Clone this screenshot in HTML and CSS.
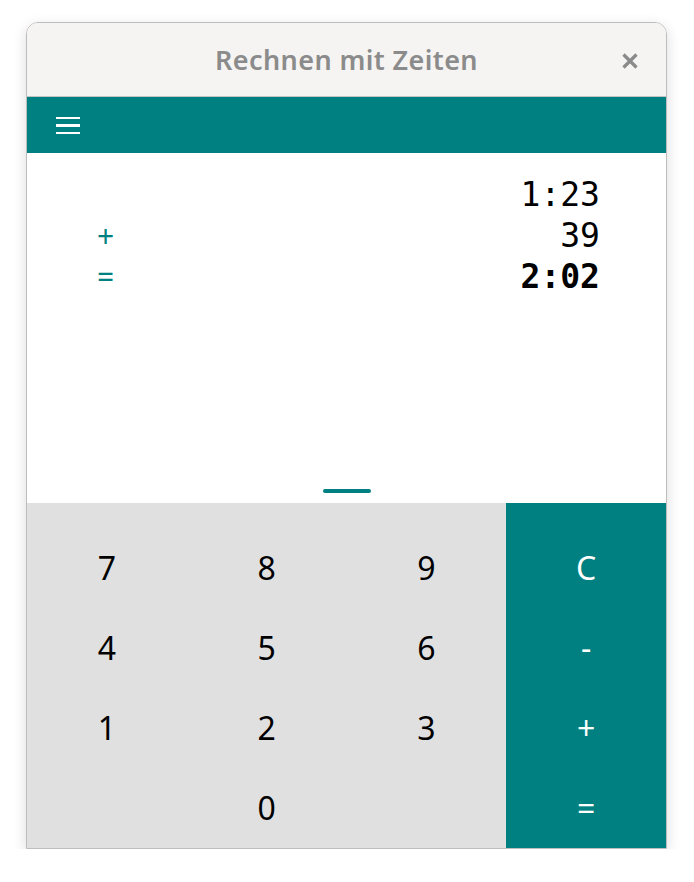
FILE: index.html
```html
<!DOCTYPE html>
<html lang="de">
<head>
<meta charset="utf-8">
<title>Rechnen mit Zeiten</title>
<link rel="stylesheet" href="styles.css">
</head>
<body>
<div class="window">
  <header class="titlebar">
    <span class="title">Rechnen mit Zeiten</span>
    <button class="close" aria-label="Schließen">
      <svg width="16" height="16" viewBox="0 0 16 16"><path d="M1.5 1.5L14.5 14.5M14.5 1.5L1.5 14.5" stroke="#8a8a8a" stroke-width="3.2" stroke-linecap="butt"/></svg>
    </button>
  </header>
  <div class="toolbar">
    <div class="hamburger"><span></span><span></span><span></span></div>
  </div>
  <main class="display">
    <div class="lines">
      <span class="sign"></span><span class="value">1:23</span>
      <span class="sign">+</span><span class="value">39</span>
      <span class="sign">=</span><span class="value result">2:02</span>
    </div>
    <div class="handle"></div>
  </main>
  <section class="keypad">
    <div class="digits">
      <div class="key">7</div><div class="key">8</div><div class="key">9</div>
      <div class="key">4</div><div class="key">5</div><div class="key">6</div>
      <div class="key">1</div><div class="key">2</div><div class="key">3</div>
      <div class="key"></div><div class="key">0</div><div class="key"></div>
    </div>
    <div class="ops">
      <div class="key">C</div>
      <div class="key">-</div>
      <div class="key">+</div>
      <div class="key">=</div>
    </div>
  </section>
</div>
</body>
</html>
```
FILE: styles.css
```css
html, body {
  margin: 0;
  padding: 0;
  background: #ffffff;
}
body {
  padding: 22px 27px 0 26px;
  font-family: "Noto Sans", "Open Sans", sans-serif;
}
.window {
  width: 639px;
  border: 1px solid #bdbdbd;
  border-radius: 12px 12px 0 0;
  overflow: hidden;
  box-shadow: 0 4px 14px rgba(0, 0, 0, 0.14);
  display: flex;
  flex-direction: column;
}
.titlebar {
  height: 73px;
  background: #f5f4f2;
  border-bottom: 1px solid #c4c4c4;
  display: flex;
  align-items: center;
  justify-content: center;
  position: relative;
}
.title {
  font-size: 27px;
  font-weight: 600;
  color: #8b8b8b;
  letter-spacing: 0.4px;
}
.close {
  position: absolute;
  right: 24px;
  top: 28px;
  width: 24px;
  height: 20px;
  padding: 0;
  border: 0;
  background: transparent;
  display: flex;
  align-items: center;
  justify-content: center;
}
.toolbar {
  height: 56px;
  background: #008080;
  display: flex;
  align-items: center;
  padding-left: 29px;
}
.hamburger {
  width: 24px;
  display: flex;
  flex-direction: column;
  gap: 5px;
  margin-top: 1px;
}
.hamburger span {
  display: block;
  height: 2.5px;
  background: #ffffff;
}
.display {
  height: 350px;
  background: #ffffff;
  display: flex;
  flex-direction: column;
  align-items: stretch;
}
.lines {
  display: grid;
  grid-template-columns: auto 1fr;
  grid-auto-rows: 41px;
  padding: 21px 66px 0 70px;
  font-family: "DejaVu Sans Mono", monospace;
  font-size: 33px;
  line-height: 41px;
}
.sign {
  color: #008080;
  font-family: "Noto Sans", sans-serif;
  font-size: 30px;
}
.value {
  text-align: right;
  color: #000;
}
.result {
  font-weight: bold;
}
.handle {
  margin: auto auto 10px;
  width: 48px;
  height: 4px;
  border-radius: 2px;
  background: #008080;
}
.keypad {
  display: flex;
  height: 345px;
}
.digits {
  flex: 3;
  background: #e0e0e0;
  display: grid;
  grid-template-columns: repeat(3, 1fr);
  grid-auto-rows: 80px;
  padding-top: 24px;
}
.ops {
  flex: 1;
  background: #008080;
  display: grid;
  grid-auto-rows: 80px;
  padding-top: 24px;
  color: #ffffff;
}
.key {
  display: flex;
  align-items: center;
  justify-content: center;
  font-size: 32px;
  color: #000;
}
.ops .key {
  color: #ffffff;
}
```
